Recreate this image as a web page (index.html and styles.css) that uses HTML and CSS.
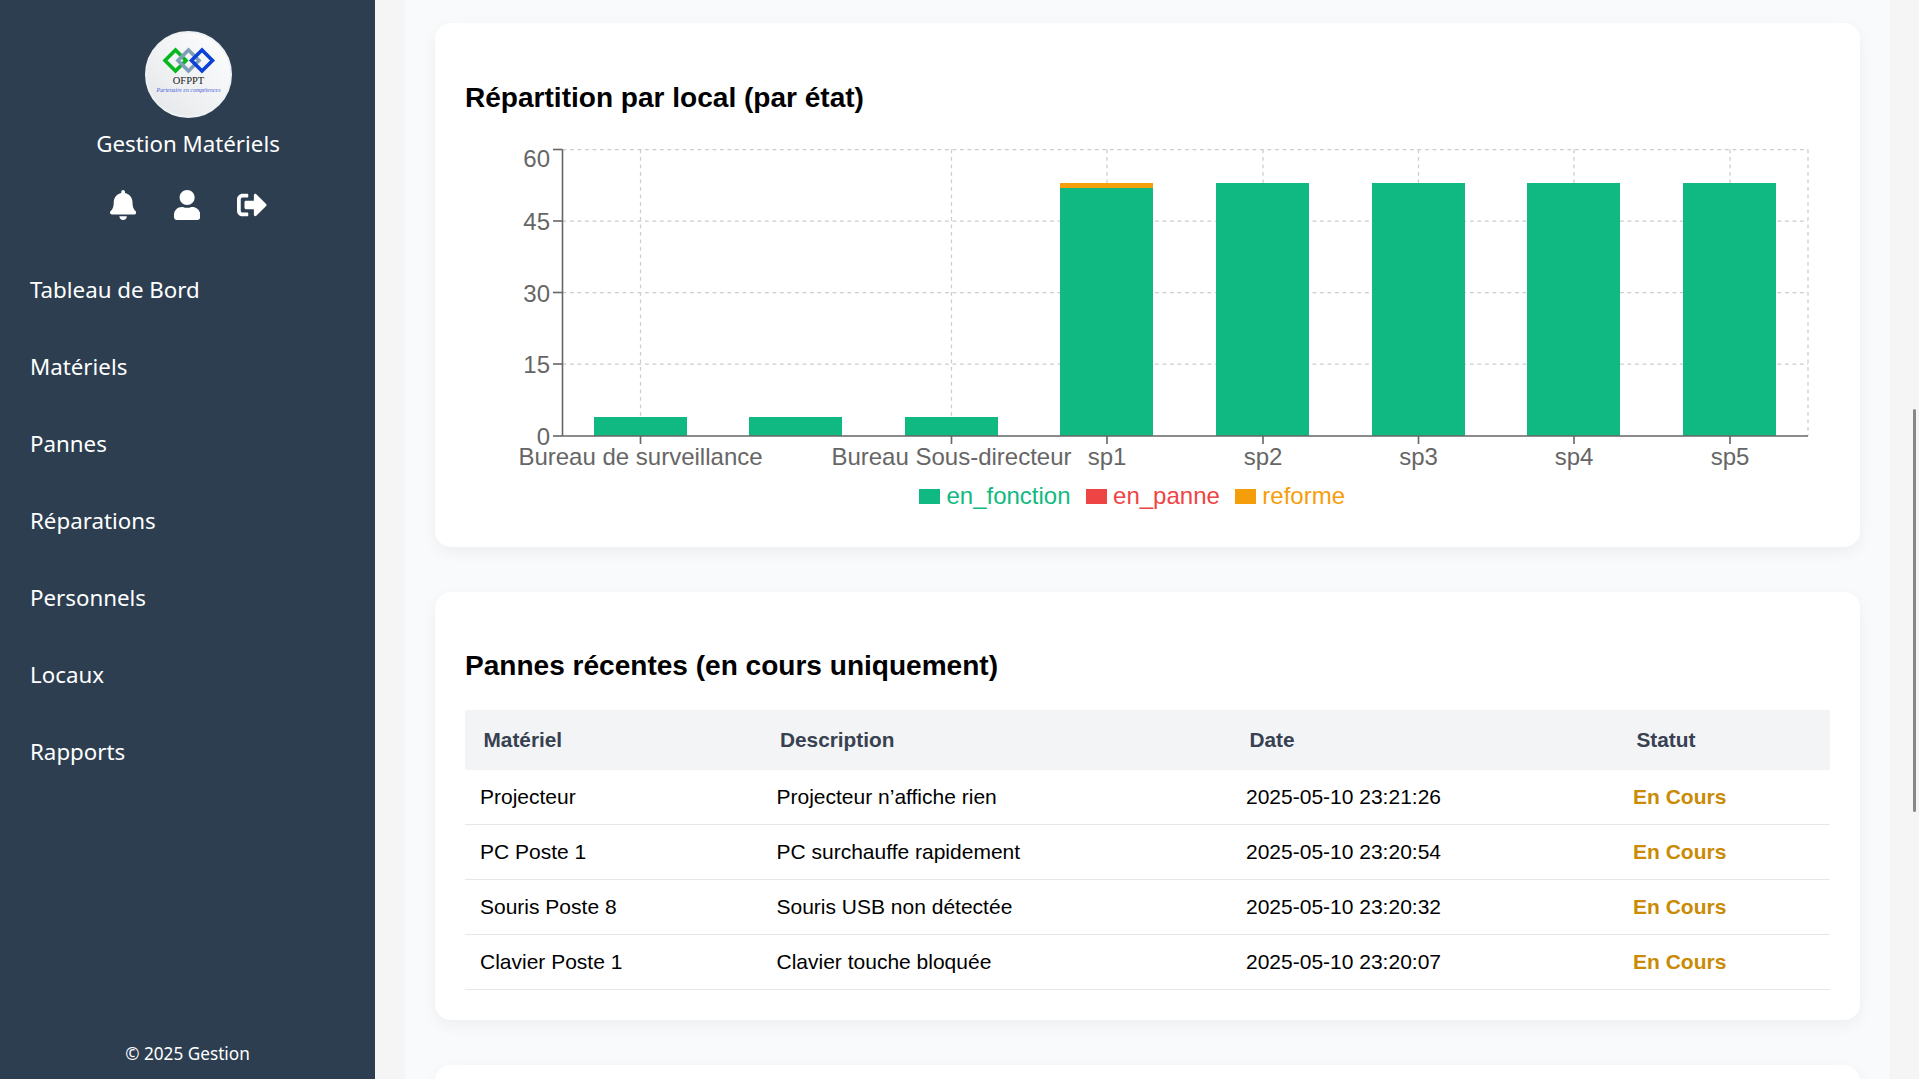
FILE: index.html
```html
<!DOCTYPE html>
<html lang="fr">
<head>
<meta charset="UTF-8">
<meta name="viewport" content="width=device-width, initial-scale=1.0">
<title>Gestion Matériels</title>
<link rel="stylesheet" href="styles.css">
</head>
<body>

<div class="app">
  <aside class="sidebar">
    <svg class="logo" viewBox="0 0 87 87" aria-label="OFPPT">
      <defs>
        <linearGradient id="logoBg" x1="0" y1="1" x2="1" y2="0">
          <stop offset="0" stop-color="#e3e6e9"/>
          <stop offset="1" stop-color="#ffffff"/>
        </linearGradient>
      </defs>
      <circle cx="43.5" cy="43.5" r="42.5" fill="url(#logoBg)" stroke="#eef2f5" stroke-width="2"/>
      <path d="M30.5 19 41 29.5 30.5 40 20 29.5Z" fill="none" stroke="#06b81e" stroke-width="3.6"/>
      <path d="M43.5 19 54 29.5 43.5 40 33 29.5Z" fill="none" stroke="#7f9fb8" stroke-width="3.6"/>
      <path d="M57 19 67.5 29.5 57 40 46.5 29.5Z" fill="none" stroke="#0b41d6" stroke-width="3.6"/>
      <text class="logo-name" x="43.5" y="52.5">OFPPT</text>
      <text class="logo-tag" x="43.5" y="61">Partenaire en compétences</text>
    </svg>
    <div class="brand">Gestion Matériels</div>
    <div class="side-icons">
      <svg class="bell" viewBox="0 0 448 512"><path d="M224 512c35.32 0 63.97-28.65 63.97-64H160.03c0 35.35 28.65 64 63.97 64zm215.39-149.71c-19.32-20.76-55.47-51.99-55.47-154.29 0-77.7-54.48-139.9-127.94-155.16V32c0-17.67-14.32-32-31.98-32s-31.98 14.33-31.98 32v20.84C118.56 68.1 64.08 130.3 64.08 208c0 102.3-36.15 133.53-55.47 154.29-6 6.45-8.66 14.16-8.61 21.71.11 16.4 12.98 32 32.1 32h383.8c19.12 0 32-15.6 32.1-32 .05-7.55-2.61-15.27-8.61-21.71z"/></svg>
      <svg class="user" viewBox="0 0 448 512"><path d="M224 256c70.7 0 128-57.3 128-128S294.7 0 224 0 96 57.3 96 128s57.3 128 128 128zm89.6 32h-16.7c-22.2 10.2-46.9 16-72.9 16s-50.6-5.8-72.9-16h-16.7C60.2 288 0 348.2 0 422.4V464c0 26.5 21.5 48 48 48h352c26.5 0 48-21.5 48-48v-41.6c0-74.2-60.2-134.4-134.4-134.4z"/></svg>
      <svg class="logout" viewBox="0 0 512 512"><path d="M497 273L329 441c-15 15-41 4.5-41-17v-96H152c-13.3 0-24-10.7-24-24v-96c0-13.3 10.7-24 24-24h136V88c0-21.4 25.9-32 41-17l168 168c9.3 9.4 9.3 24.6 0 34zM192 436v-40c0-6.6-5.4-12-12-12H96c-17.7 0-32-14.3-32-32V160c0-17.7 14.3-32 32-32h84c6.6 0 12-5.4 12-12V76c0-6.6-5.4-12-12-12H96c-53 0-96 43-96 96v192c0 53 43 96 96 96h84c6.6 0 12-5.4 12-12z"/></svg>
    </div>
    <nav class="side-nav">
      <a href="#">Tableau de Bord</a>
      <a href="#">Matériels</a>
      <a href="#">Pannes</a>
      <a href="#">Réparations</a>
      <a href="#">Personnels</a>
      <a href="#">Locaux</a>
      <a href="#">Rapports</a>
    </nav>
    <div class="side-footer">© 2025 Gestion</div>
  </aside>

  <main class="main">
    <section class="card">
      <h2 class="chart-title">Répartition par local (par état)</h2>
      <div class="chart">
        <svg class="chart-svg" width="1365" height="340" viewBox="0 0 1365 340">
          <!-- grid -->
          <g class="grid">
            <line x1="97.5" y1="8.5" x2="1343" y2="8.5"/>
            <line x1="97.5" y1="80" x2="1343" y2="80"/>
            <line x1="97.5" y1="151.5" x2="1343" y2="151.5"/>
            <line x1="97.5" y1="223" x2="1343" y2="223"/>
            <line x1="175.5" y1="8.5" x2="175.5" y2="295"/>
            <line x1="486.5" y1="8.5" x2="486.5" y2="295"/>
            <line x1="642" y1="8.5" x2="642" y2="295"/>
            <line x1="798" y1="8.5" x2="798" y2="295"/>
            <line x1="953.5" y1="8.5" x2="953.5" y2="295"/>
            <line x1="1109" y1="8.5" x2="1109" y2="295"/>
            <line x1="1265" y1="8.5" x2="1265" y2="295"/>
            <line x1="1343" y1="8.5" x2="1343" y2="295"/>
          </g>
          <!-- bars -->
          <g class="bars-ok">
            <rect x="129" y="276" width="93" height="19"/>
            <rect x="284" y="276" width="93" height="19"/>
            <rect x="440" y="276" width="93" height="19"/>
            <rect x="595" y="47" width="93" height="248"/>
            <rect x="751" y="42" width="93" height="253"/>
            <rect x="907" y="42" width="93" height="253"/>
            <rect x="1062" y="42" width="93" height="253"/>
            <rect x="1218" y="42" width="93" height="253"/>
          </g>
          <rect class="bar-reforme" x="595" y="42" width="93" height="5"/>
          <!-- axes -->
          <g class="axis">
            <line x1="97.5" y1="8.5" x2="97.5" y2="295"/>
            <line x1="97.5" y1="295" x2="1343" y2="295"/>
            <line x1="88" y1="8.5" x2="97.5" y2="8.5"/>
            <line x1="88" y1="80" x2="97.5" y2="80"/>
            <line x1="88" y1="151.5" x2="97.5" y2="151.5"/>
            <line x1="88" y1="223" x2="97.5" y2="223"/>
            <line x1="88" y1="295" x2="97.5" y2="295"/>
            <line x1="175.5" y1="295" x2="175.5" y2="303"/>
            <line x1="486.5" y1="295" x2="486.5" y2="303"/>
            <line x1="642" y1="295" x2="642" y2="303"/>
            <line x1="798" y1="295" x2="798" y2="303"/>
            <line x1="953.5" y1="295" x2="953.5" y2="303"/>
            <line x1="1109" y1="295" x2="1109" y2="303"/>
            <line x1="1265" y1="295" x2="1265" y2="303"/>
          </g>
          <g class="y-labels">
            <text x="85" y="26">60</text>
            <text x="85" y="89">45</text>
            <text x="85" y="160.5">30</text>
            <text x="85" y="232">15</text>
            <text x="85" y="304">0</text>
          </g>
          <g class="x-labels">
            <text x="175.5" y="324">Bureau de surveillance</text>
            <text x="486.5" y="324">Bureau Sous-directeur</text>
            <text x="642" y="324">sp1</text>
            <text x="798" y="324">sp2</text>
            <text x="953.5" y="324">sp3</text>
            <text x="1109" y="324">sp4</text>
            <text x="1265" y="324">sp5</text>
          </g>
        </svg>
        <ul class="legend">
          <li class="ok"><i></i>en_fonction</li>
          <li class="panne"><i></i>en_panne</li>
          <li class="reforme"><i></i>reforme</li>
        </ul>
      </div>
    </section>

    <section class="card">
      <h2>Pannes récentes (en cours uniquement)</h2>
      <table class="table">
        <colgroup>
          <col class="col-mat">
          <col class="col-desc">
          <col class="col-date">
          <col class="col-stat">
        </colgroup>
        <thead>
          <tr><th>Matériel</th><th>Description</th><th>Date</th><th>Statut</th></tr>
        </thead>
        <tbody>
          <tr><td>Projecteur</td><td>Projecteur n’affiche rien</td><td>2025-05-10 23:21:26</td><td class="status">En Cours</td></tr>
          <tr><td>PC Poste 1</td><td>PC surchauffe rapidement</td><td>2025-05-10 23:20:54</td><td class="status">En Cours</td></tr>
          <tr><td>Souris Poste 8</td><td>Souris USB non détectée</td><td>2025-05-10 23:20:32</td><td class="status">En Cours</td></tr>
          <tr><td>Clavier Poste 1</td><td>Clavier touche bloquée</td><td>2025-05-10 23:20:07</td><td class="status">En Cours</td></tr>
        </tbody>
      </table>
    </section>

    <section class="card card-next"></section>
  </main>
</div>

<div class="scroll-thumb"></div>

</body>
</html>
```

FILE: styles.css
```css
* {
  box-sizing: border-box;
}
html, body {
  height: 100%;
}
body {
  margin: 0;
  background: #f5f5f5;
  font-family: "Liberation Sans", Arial, sans-serif;
  color: #000;
  overflow: hidden;
}
.app {
  display: flex;
  height: 1079px;
}
.sidebar {
  width: 375px;
  flex-shrink: 0;
  display: flex;
  flex-direction: column;
  align-items: center;
  padding-top: 31px;
  background: #2c3e50;
  color: #fff;
  font-family: "Noto Sans", "Open Sans", sans-serif;
}
.logo {
  width: 87px;
  height: 87px;
  display: block;
  margin-left: 1px;
}
.logo-name {
  font-family: "Liberation Serif", serif;
  font-size: 10.5px;
  fill: #1a1a1a;
  text-anchor: middle;
}
.logo-tag {
  font-family: "Liberation Serif", serif;
  font-style: italic;
  font-size: 5.9px;
  fill: #4a5fd8;
  text-anchor: middle;
}
.brand {
  margin-top: 11px;
  padding-left: 1px;
  font-size: 22.3px;
  line-height: 30px;
}
.side-icons {
  display: flex;
  align-items: center;
  gap: 37.5px;
  margin-top: 31px;
  margin-left: 2px;
}
.side-icons svg {
  height: 30px;
  fill: #fff;
  display: block;
}
.bell, .user {
  width: 26.25px;
}
.logout {
  width: 30px;
}
.side-nav {
  align-self: stretch;
  display: flex;
  flex-direction: column;
  margin-top: 31px;
}
.side-nav a {
  height: 77px;
  display: flex;
  align-items: center;
  padding-left: 30px;
  color: #fff;
  text-decoration: none;
  font-size: 22.3px;
}
.side-footer {
  margin-top: auto;
  margin-bottom: 13px;
  font-size: 17.2px;
  line-height: 24px;
}
.main {
  flex: 1;
  margin: 0 29px 0 30px;
  padding: 23px 30px 0;
  background: #f9fafb;
  overflow: hidden;
}
.card {
  background: #fff;
  border-radius: 16px;
  padding: 30px;
  margin-bottom: 45px;
  box-shadow: 0 5px 15px rgba(0, 0, 0, 0.05);
}
.card-next {
  height: 300px;
}
.card h2 {
  margin: 28px 0;
  font-size: 28.06px;
  line-height: 32px;
  font-weight: 700;
}
.card .chart-title {
  margin: 29px 0 27px;
}
.chart {
  height: 376px;
}
.chart-svg {
  display: block;
}
.grid line {
  stroke: #ccc;
  stroke-width: 1.25;
  stroke-dasharray: 3.75 3.75;
}
.axis line {
  stroke: #666;
  stroke-width: 1.6;
}
.bars-ok rect {
  fill: #10b981;
}
.bar-reforme {
  fill: #f59e0b;
}
.y-labels text, .x-labels text {
  font-size: 24px;
  fill: #666;
}
.y-labels text {
  text-anchor: end;
}
.x-labels text {
  text-anchor: middle;
}
.legend {
  display: flex;
  justify-content: center;
  gap: 15px;
  margin: 0;
  padding: 0 31px 0 0;
  list-style: none;
  font-size: 24px;
  line-height: 30px;
}
.legend li {
  display: flex;
  align-items: center;
  gap: 6.5px;
}
.legend i {
  display: block;
  width: 21px;
  height: 15px;
}
.legend .ok { color: #10b981; }
.legend .ok i { background: #10b981; }
.legend .panne { color: #ef4444; }
.legend .panne i { background: #ef4444; }
.legend .reforme { color: #f59e0b; }
.legend .reforme i { background: #f59e0b; }
.table {
  width: 100%;
  border-collapse: separate;
  border-spacing: 0;
  table-layout: fixed;
  font-size: 21px;
}
.col-mat { width: 296.5px; }
.col-desc { width: 469.5px; }
.col-date { width: 387px; }
.table th {
  height: 60px;
  padding: 0 18.5px;
  background: #f3f4f6;
  color: #374151;
  text-align: left;
  font-size: 20.8px;
  font-weight: 700;
}
.table td {
  height: 55px;
  padding: 0 15px;
  border-bottom: 1px solid #e5e7eb;
}
.table .status {
  color: #ca8a04;
  font-weight: 700;
  font-size: 21px;
}
.scroll-thumb {
  position: absolute;
  left: 1913px;
  top: 409px;
  width: 3px;
  height: 403px;
  background: #888;
  border-radius: 2px;
}
```
